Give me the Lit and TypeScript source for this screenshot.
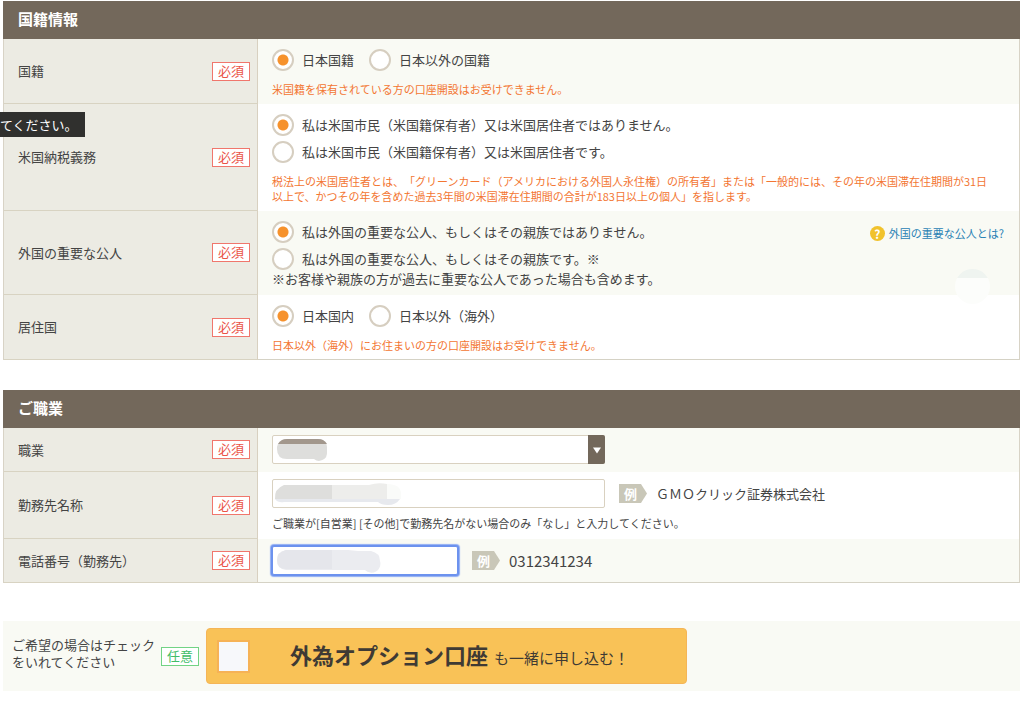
import { LitElement, html, css, svg } from "lit";
import { customElement, property } from "lit/decorators.js";

const base = css`
  * {
    box-sizing: border-box;
  }
`;

@customElement("status-badge")
class StatusBadge extends LitElement {
  @property({ type: Boolean }) optional = false;

  static styles = css`
    :host {
      display: block;
      flex: none;
    }
    .badge {
      display: block;
      padding: 0 5px 2px;
      border: 1px solid #f0766c;
      background: #fff;
      color: #ea5347;
      font-size: 13px;
      line-height: 15px;
      text-align: center;
    }
    .optional {
      border-color: #72d384;
      color: #42bd68;
    }
  `;

  render() {
    return html`<span class="badge ${this.optional ? "optional" : ""}"
      >${this.optional ? "任意" : "必須"}</span
    >`;
  }
}

@customElement("form-row")
class FormRow extends LitElement {
  @property() label = "";
  @property({ type: Boolean, reflect: true }) shaded = false;

  static styles = [
    base,
    css`
      :host {
        display: flex;
        position: relative;
        background: #fff;
      }
      :host([shaded]) {
        background: #f9faf4;
      }
      .head {
        flex: none;
        display: flex;
        align-items: center;
        justify-content: space-between;
        width: 254px;
        padding: 0 7px 0 14px;
        border-right: 1px solid #d8d0c0;
        border-bottom: 1px solid #d8d3c2;
        background: #ecebe3;
      }
      .body {
        flex: 1;
        min-width: 0;
        padding: 0 15px 0 14px;
        border-bottom: 1px solid transparent;
      }
      :host(:last-child) .body {
        border-color: #d5d2c5;
      }
    `,
  ];

  render() {
    return html`
      <div class="head"><span>${this.label}</span><status-badge></status-badge></div>
      <div class="body"><slot></slot></div>
    `;
  }
}

@customElement("app-root")
class AppRoot extends LitElement {
  static styles = [
    base,
    css`
      :host {
        display: block;
        position: relative;
        padding: 1px 4px 11px 3px;
        background: #fff;
        color: #444;
        font-family: "Noto Sans CJK JP", sans-serif;
        font-size: 13px;
        line-height: 18px;
        text-spacing-trim: space-all;
      }
      .section {
        margin-bottom: 30px;
      }
      .last {
        margin-bottom: 38px;
      }
      .title {
        margin: 0;
        padding: 0 15px 2px;
        background: #73685b;
        color: #fff;
        font-size: 15px;
        font-weight: 700;
        line-height: 36px;
      }
      .rows {
        border: 1px solid #d8d3c6;
        border-width: 0 1px;
      }
      .choices {
        padding: 10px 0 6px;
      }
      .stack,
      .inline {
        display: flex;
        gap: 5px;
      }
      .stack {
        flex-direction: column;
        align-items: flex-start;
      }
      .inline {
        gap: 15px;
      }
      .choice {
        display: flex;
        align-items: center;
        gap: 8px;
        line-height: 22px;
      }
      .radio {
        appearance: none;
        flex: none;
        width: 22px;
        height: 22px;
        margin: 0;
        border: 2px solid #d6cec0;
        border-radius: 50%;
        background: #fff;
      }
      .radio:checked {
        background: radial-gradient(circle, #f6922d 5px, #fff 6px);
      }
      .note {
        margin: 0;
        padding: 11px 8px 0 0;
        color: #f37632;
        font-size: 11px;
        line-height: 15px;
      }
      .remark {
        margin: 0;
      }
      .split {
        display: flex;
        justify-content: space-between;
        align-items: flex-start;
      }
      .help {
        display: flex;
        align-items: center;
        gap: 4px;
        color: #2a82b5;
        font-size: 11px;
        line-height: 24px;
        text-decoration: none;
      }
      .help-icon {
        width: 15px;
        height: 15px;
        border-radius: 50%;
        background: #f1c22c;
        color: #fff;
        font-size: 12px;
        font-weight: 700;
        line-height: 15px;
        text-align: center;
      }
      .ghost {
        position: absolute;
        z-index: 1;
        right: 29px;
        bottom: -9px;
        width: 35px;
        height: 35px;
        border-radius: 50%;
        background: linear-gradient(#eff4f0 9px, #fcfdfb 9px);
      }
      .fields {
        padding: 7px 0;
      }
      .line {
        display: flex;
        align-items: center;
        gap: 14px;
      }
      .field {
        position: relative;
        display: block;
        width: 333px;
        height: 29px;
      }
      .short {
        width: 186px;
      }
      .control {
        appearance: none;
        display: block;
        width: 100%;
        height: 100%;
        margin: 0;
        padding: 0 8px;
        border: 1px solid #d9d1c0;
        border-radius: 2px;
        outline: none;
        background: #fff;
        color: #444;
        font: inherit;
      }
      .active {
        border-color: #6c92ee;
        box-shadow: 0 0 0 1px #6c92ee, 0 0 1px 2px #8facf3;
      }
      .arrow {
        position: absolute;
        top: 0;
        right: 0;
        width: 17px;
        height: 29px;
        border-radius: 0 2px 2px 0;
        background: #73685b;
        pointer-events: none;
      }
      .mask {
        position: absolute;
        top: 3px;
        left: 2px;
        pointer-events: none;
      }
      .example {
        display: flex;
        align-items: center;
        gap: 9px;
      }
      .tag {
        width: 28px;
        padding-left: 5px;
        background: #c9c7b8;
        clip-path: polygon(0 0, 22px 0, 100% 50%, 22px 100%, 0 100%);
        color: #fff;
        font-weight: 700;
        line-height: 19px;
      }
      .number {
        font-size: 15px;
      }
      .hint {
        margin: 0;
        padding-top: 8px;
        font-size: 11px;
        line-height: 15px;
      }
      .option {
        display: flex;
        align-items: center;
        padding: 7px 9px;
        background: #f9faf4;
      }
      .ask {
        margin: 0 6px 0 0;
        padding-bottom: 6px;
        line-height: 17px;
      }
      .offer {
        display: flex;
        align-items: center;
        width: 481px;
        height: 56px;
        margin-left: 7px;
        padding: 0 10px;
        border: 1px solid #f5b556;
        border-radius: 4px;
        background: #f9c257;
        color: #3f3a34;
      }
      .check {
        appearance: none;
        flex: none;
        width: 33px;
        height: 33px;
        margin: 0 40px 0 0;
        border: 2px solid #f6b256;
        background: #f7f8fb;
      }
      .offer-text {
        font-size: 15px;
        line-height: 32px;
      }
      .offer-name {
        margin-right: 6px;
        font-size: 22px;
      }
      .tip {
        position: absolute;
        z-index: 2;
        top: 112px;
        left: 0;
        padding-right: 7px;
        background: #30302e;
        color: #fff;
        line-height: 25px;
      }
    `,
  ];

  private choice(name: string, text: string, checked = false) {
    return html`<label class="choice"
      ><input class="radio" type="radio" name=${name} .checked=${checked} />${text}</label
    >`;
  }

  private mask(shapes: unknown) {
    return html`<svg class="mask" width="136" height="26" aria-hidden="true">${shapes}</svg>`;
  }

  render() {
    return html`
      <section class="section">
        <h2 class="title">国籍情報</h2>
        <div class="rows">
          <form-row label="国籍" shaded>
            <div class="choices" role="radiogroup" aria-label="国籍">
              <div class="inline">
                ${this.choice("nation", "日本国籍", true)} ${this.choice("nation", "日本以外の国籍")}
              </div>
              <p class="note">米国籍を保有されている方の口座開設はお受けできません。</p>
            </div>
          </form-row>
          <form-row label="米国納税義務">
            <div class="choices" role="radiogroup" aria-label="米国納税義務">
              <div class="stack">
                ${this.choice("tax", "私は米国市民（米国籍保有者）又は米国居住者ではありません。", true)}
                ${this.choice("tax", "私は米国市民（米国籍保有者）又は米国居住者です。")}
              </div>
              <p class="note">
                税法上の米国居住者とは、「グリーンカード（アメリカにおける外国人永住権）の所有者」または「一般的には、その年の米国滞在住期間が31日以上で、かつその年を含めた過去3年間の米国滞在住期間の合計が183日以上の個人」を指します。
              </p>
            </div>
          </form-row>
          <form-row label="外国の重要な公人" shaded>
            <div class="choices" role="radiogroup" aria-label="外国の重要な公人">
              <div class="split">
                <div class="stack">
                  ${this.choice("pep", "私は外国の重要な公人、もしくはその親族ではありません。", true)}
                  ${this.choice("pep", "私は外国の重要な公人、もしくはその親族です。※")}
                </div>
                <a class="help" href="#"><span class="help-icon">?</span>外国の重要な公人とは?</a>
              </div>
              <p class="remark">※お客様や親族の方が過去に重要な公人であった場合も含めます。</p>
            </div>
            <span class="ghost"></span>
          </form-row>
          <form-row label="居住国">
            <div class="choices" role="radiogroup" aria-label="居住国">
              <div class="inline">
                ${this.choice("live", "日本国内", true)} ${this.choice("live", "日本以外（海外）")}
              </div>
              <p class="note">日本以外（海外）にお住まいの方の口座開設はお受けできません。</p>
            </div>
          </form-row>
        </div>
      </section>

      <section class="section last">
        <h2 class="title">ご職業</h2>
        <div class="rows">
          <form-row label="職業" shaded>
            <div class="fields">
              <div class="field">
                <select class="control" aria-label="職業"><option></option></select>
                <svg class="arrow" viewBox="0 0 17 29" aria-hidden="true">
                  <path d="M5 12.5h8l-4 6z" fill="#fff" />
                </svg>
                ${this.mask(svg`
                  <path d="M3 9Q5 1 12 1H45Q52 1 53 9V14A8 8 0 0 1 40 21H13Q3 21 3 11Z" fill="#dededc"/>
                  <path d="M4 6Q7 1 13 1H44Q50 1 53 6Z" fill="#a2978c"/>`)}
              </div>
            </div>
          </form-row>
          <form-row label="勤務先名称">
            <div class="fields">
              <div class="line">
                <div class="field">
                  <input class="control" type="text" aria-label="勤務先名称" />
                  ${this.mask(svg`
                    <path d="M10 3H58V17H1Q0 7 10 3Z" fill="#dededc"/>
                    <path d="M58 3H95Q104 0 113 2V17H58Z" fill="#ededeb"/>
                    <path d="M113 2Q127 2 127 12V17H113Z" fill="#fafbf9"/>
                    <path d="M1 17H126Q122 23 114 23 107 23 104 20H10Q4 21 1 17Z" fill="#e7e9ee"/>`)}
                </div>
                <div class="example"><span class="tag">例</span><span>ＧＭＯクリック証券株式会社</span></div>
              </div>
              <p class="hint">ご職業が[自営業] [その他]で勤務先名がない場合のみ「なし」と入力してください。</p>
            </div>
          </form-row>
          <form-row label="電話番号（勤務先）" shaded>
            <div class="fields">
              <div class="line">
                <div class="field short">
                  <input class="control active" type="tel" aria-label="電話番号（勤務先）" />
                  ${this.mask(svg`
                    <path d="M12 1H74L84 2H97Q106 4 106 12A9 9 0 0 1 91 21H12Q3 20 3 11 3 3 12 1Z" fill="#ebecf0"/>
                    <path d="M12 1H58V20H12Q3 20 3 11 3 3 12 1Z" fill="#e5e6eb"/>`)}
                </div>
                <div class="example"><span class="tag">例</span><span class="number">0312341234</span></div>
              </div>
            </div>
          </form-row>
        </div>
      </section>

      <section class="option">
        <p class="ask">ご希望の場合はチェック<br />をいれてください</p>
        <status-badge optional></status-badge>
        <label class="offer">
          <input class="check" type="checkbox" />
          <span class="offer-text"><strong class="offer-name">外為オプション口座</strong>も一緒に申し込む！</span>
        </label>
      </section>
      <div class="tip" role="tooltip">てください。</div>
    `;
  }
}
